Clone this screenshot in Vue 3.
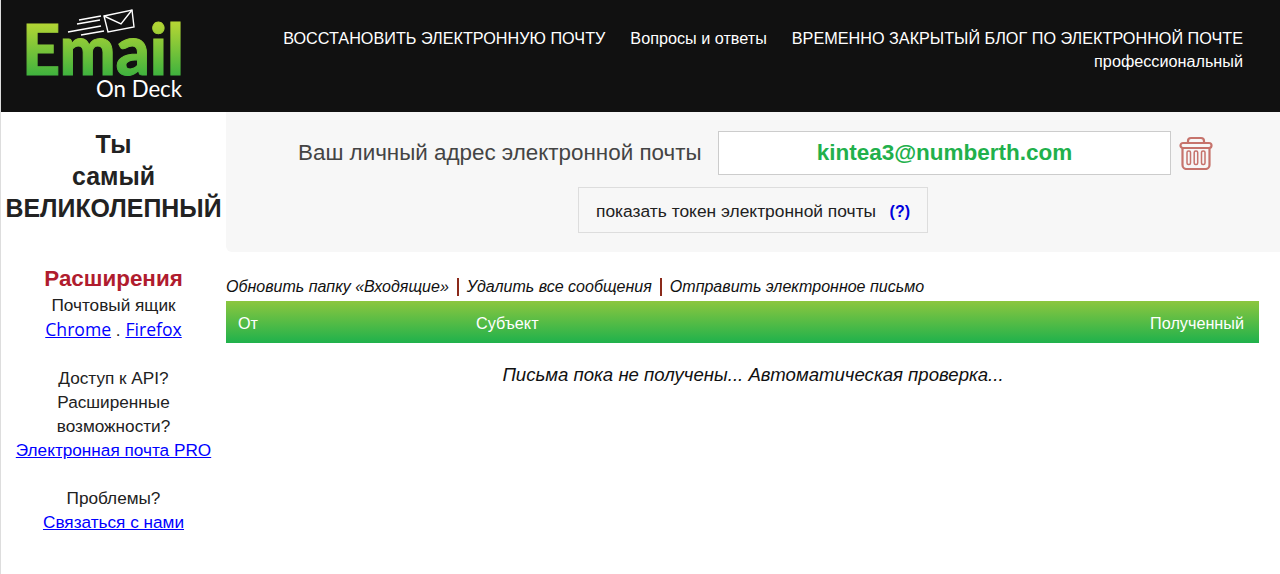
<template>
  <div class="page">
    <header class="header">
      <div class="logo">
        <svg class="logo-svg" width="200" height="112" viewBox="0 0 200 112">
          <defs>
            <linearGradient id="lg" gradientUnits="userSpaceOnUse" x1="0" y1="24" x2="0" y2="76">
              <stop offset="0" stop-color="#b2d534" />
              <stop offset="1" stop-color="#3eb23e" />
            </linearGradient>
          </defs>
          <g fill="none" stroke="#fff" stroke-width="1.4">
            <path d="M103 16 L131 10 L133 27 L107 32 Z" />
            <path d="M103 16 L120 24 L131 10" />
            <path d="M78 20 L100 16 M76 24 L99 20 M67 32 L100 26 M80 35 L103 31" />
          </g>
          <text x="21" y="75" class="logo-email" fill="url(#lg)" stroke="url(#lg)" stroke-width="1" textLength="162" lengthAdjust="spacingAndGlyphs">Email</text>
          <text x="95" y="97" class="logo-deck" fill="#fff" textLength="86" lengthAdjust="spacingAndGlyphs">On Deck</text>
        </svg>
      </div>
      <nav class="nav">
        <div class="nav-row">
          <a>ВОССТАНОВИТЬ ЭЛЕКТРОННУЮ ПОЧТУ</a>
          <a>Вопросы и ответы</a>
          <a>ВРЕМЕННО ЗАКРЫТЫЙ БЛОГ ПО ЭЛЕКТРОННОЙ ПОЧТЕ</a>
        </div>
        <div class="nav-second">профессиональный</div>
      </nav>
    </header>
    <div class="body">
      <aside class="side">
        <h2 class="tag">Ты<br />самый<br />ВЕЛИКОЛЕПНЫЙ</h2>
        <h3 class="ext">Расширения</h3>
        <p class="block first">Почтовый ящик<br /><a class="os" href="#">Chrome</a> . <a class="os" href="#">Firefox</a></p>
        <p class="block">Доступ к API?<br />Расширенные<br />возможности?<br /><a href="#">Электронная почта PRO</a></p>
        <p class="block">Проблемы?<br /><a href="#">Связаться с нами</a></p>
      </aside>
      <main class="main">
        <section class="banner">
          <div class="addr-row">
            <span class="addr-label">Ваш личный адрес электронной почты</span>
            <span class="addr">kintea3@numberth.com</span>
            <svg class="trash" width="34" height="34" viewBox="0 0 34 34" fill="none" stroke="#c6736c" stroke-width="2.2">
              <path d="M9 7 V5 a3 3 0 0 1 3 -3 h10 a3 3 0 0 1 3 3 V7" />
              <rect x="1.5" y="7" width="31" height="5" rx="2.5" />
              <path d="M3.5 12 V29 a4 4 0 0 0 4 4 h19 a4 4 0 0 0 4 -4 V12" />
              <rect x="8" y="15" width="3.5" height="13.500" rx="1.500" stroke-width="1.500" />
              <rect x="15.200" y="15" width="3.500" height="13.500" rx="1.500" stroke-width="1.500" />
              <rect x="22.500" y="15" width="3.500" height="13.500" rx="1.500" stroke-width="1.500" />
            </svg>
          </div>
          <div class="token"><span class="token-text">показать токен электронной почты</span> <b>(?)</b></div>
        </section>
        <div class="actions">
          <a>Обновить папку «Входящие»</a><i class="sep"></i><a>Удалить все сообщения</a><i class="sep"></i><a>Отправить электронное письмо</a>
        </div>
        <div class="thead">
          <span class="c-from">От</span>
          <span class="c-subj">Субъект</span>
          <span class="c-recv">Полученный</span>
        </div>
        <p class="empty">Письма пока не получены... Автоматическая проверка...</p>
      </main>
    </div>
  </div>
</template>

<script setup>
</script>

<style>
html, body { margin: 0; background: #fff; }
</style>

<style scoped>
.page {
  height: 574px;
  overflow: hidden;
  box-sizing: border-box;
  border-left: 1px solid #ddd;
  font-family: "Liberation Sans", Arial, sans-serif;
  color: #212121;
  background: #fff;
}
.header {
  height: 112px;
  background: #111;
  display: flex;
  justify-content: space-between;
}
.logo { width: 200px; }
.logo-svg { display: block; }
.logo-email { font-family: Lato, sans-serif; font-weight: 900; font-size: 70px; }
.logo-deck { font-family: Lato, sans-serif; font-size: 23px; }
.nav {
  color: #fff;
  font-size: 16.22px;
  text-align: right;
  padding: 28px 37px 0 0;
  line-height: 20px;
}
.nav-row { display: flex; gap: 25px; white-space: nowrap; }
.nav-second { margin-top: 3px; }
.body { display: flex; }
.side {
  width: 225px;
  flex: none;
  text-align: center;
  font-size: 17.2px;
  line-height: 24px;
}
.tag {
  margin: 16px 0 0;
  font-size: 24.9px;
  line-height: 32px;
  font-weight: 700;
  color: #222;
  white-space: nowrap;
}
.ext {
  margin: 42px 0 0;
  font-size: 22.4px;
  line-height: 26px;
  color: #b01c2e;
  font-weight: 700;
}
.block { margin: 24px 0 0; }
.block.first { margin-top: 1px; }
.block a { color: #00f; text-decoration: underline; }
.block a.os { font-family: "Open Sans", sans-serif; font-size: 17.6px; }
.main { flex: 1; min-width: 0; }
.banner {
  height: 140px;
  background: #f7f7f7;
  border-bottom-left-radius: 6px;
  box-sizing: border-box;
  padding-top: 19px;
}
.addr-row {
  display: flex;
  align-items: center;
  height: 44px;
  padding-left: 72px;
}
.addr-label { font-size: 22.4px; color: #444; width: 420px; flex: none; white-space: nowrap; }
.addr {
  width: 451px;
  height: 42px;
  flex: none;
  background: #fff;
  border: 1px solid #ccc;
  text-align: center;
  line-height: 42px;
  font-size: 22.5px;
  font-weight: 700;
  color: #21b04b;
}
.trash { margin-left: 8px; margin-top: -1px; }
.token {
  box-sizing: border-box;
  width: 350px;
  height: 46px;
  margin: 12px 0 0 352px;
  border: 1px solid #ddd;
  line-height: 47px;
  text-align: center;
  font-size: 16px;
  color: #212121;
  white-space: nowrap;
}
.token-text { font-size: 17.4px; }
.token b { color: #00d; margin-left: 9px; }
.actions {
  margin-top: 24px;
  height: 25px;
  line-height: 21px;
  font-size: 16.05px;
  font-style: italic;
  color: #111;
  white-space: nowrap;
  display: flex;
  align-items: flex-start;
}
.sep { width: 2px; height: 18px; margin: 2px 8px 0; background: #8b2a1a; }
.thead {
  width: 1033px;
  height: 42px;
  background: linear-gradient(#8cc63f, #1fb14c);
  color: #fff;
  font-size: 16.2px;
  line-height: 45px;
  display: flex;
  box-sizing: border-box;
  padding: 0 15px 0 12px;
}
.c-from { width: 238px; }
.c-subj { flex: 1; }
.empty {
  margin: 20px 0 0;
  text-align: center;
  font-style: italic;
  font-size: 18.6px;
  line-height: 24px;
  color: #111;
}
</style>
